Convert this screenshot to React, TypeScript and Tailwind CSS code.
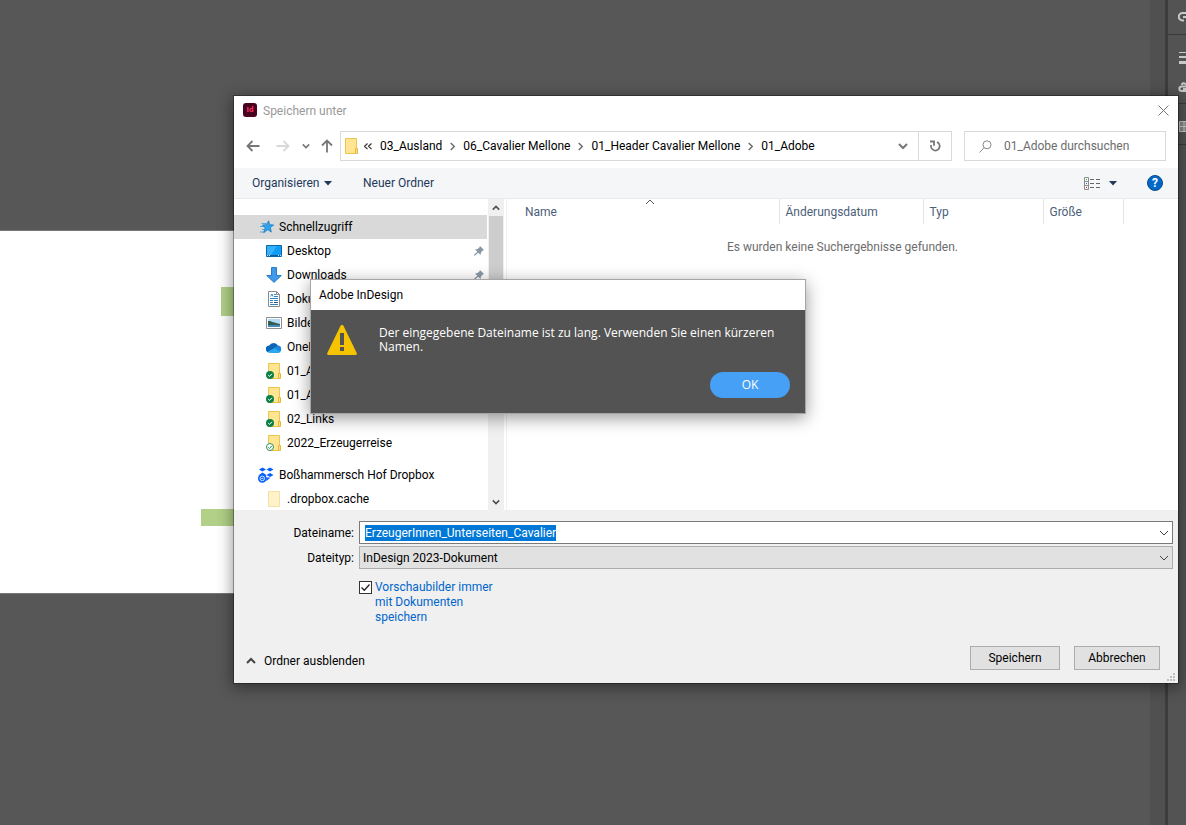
import React, { useEffect, useRef } from 'react';

interface IconProps {
  className?: string;
}

const Chevron: React.FC<IconProps & { dir: 'up' | 'down' | 'right' }> = ({ dir, className = '' }) => {
  const d = { up: 'M1 7l4-4 4 4', down: 'M1 3l4 4 4-4', right: 'M3 1l4 4-4 4' }[dir];
  return (
    <svg width="10" height="10" viewBox="0 0 10 10" fill="none" stroke="currentColor" className={`shrink-0 ${className}`}>
      <path d={d} />
    </svg>
  );
};

const Caret = () => (
  <svg width="8" height="5" viewBox="0 0 8 5" className="shrink-0"><path d="M0 0h8L4 4.6z" fill="#1e395b" /></svg>
);

const Arrow: React.FC<IconProps & { d: string }> = ({ d, className = '' }) => (
  <svg width="14" height="14" viewBox="0 0 14 14" fill="none" stroke="currentColor" strokeWidth="1.8" className={`shrink-0 ${className}`}>
    <path d={d} />
  </svg>
);

const Folder: React.FC<{ badge?: 'full' | 'outline'; pale?: boolean }> = ({ badge, pale }) => (
  <svg width="16" height="18" viewBox="0 0 16 18" className={`shrink-0 ${pale ? 'opacity-50' : ''}`}>
    <path d="M2.5 1.5h11v15h-11z" fill="#ffe492" stroke="#ecc550" />
    {!pale && <path d="M12.5 11.5h2v5h-2z" fill="#ffe08a" stroke="#e6b93c" />}
    {badge === 'full' && <circle cx="4" cy="13" r="4" fill="#0f8045" />}
    {badge === 'outline' && <circle cx="4" cy="13" r="3.5" fill="#fff" stroke="#2d9458" />}
    {badge && <path d="M2.2 13.1l1.4 1.3 2.4-2.6" fill="none" stroke={badge === 'full' ? '#fff' : '#2d9458'} />}
  </svg>
);

const StarIcon = () => (
  <svg width="14" height="14" viewBox="0 0 14 14" className="shrink-0">
    <path d="M1.5 3.5h5M0 6.5h5M2 9.5h3M0 12h5" stroke="#5aa9dd" />
    <path d="M8.6.8l1.1 3.9 4 .3-3.3 2.4.9 4.7-3.5-2.4-4.1 2.9 1.5-4.7L2.400 5l4.2-.3z" fill="#2aa5ee" stroke="#1673b8" strokeWidth=".7" />
  </svg>
);

const DesktopIcon = () => (
  <svg width="16" height="12" viewBox="0 0 16 12" className="shrink-0">
    <path d="M.5.5h15v11H.5z" fill="#0f9cf5" stroke="#0a66a8" />
    <path d="M1 1h10L5 10H1z" fill="#35b0fb" />
    <path d="M1 10.5h14" stroke="#0a5c99" />
    <path d="M1 10.5h1M3 10.5h1M12 10.5h1M14 10.5h1" stroke="#cfeaff" />
  </svg>
);

const DownloadIcon = () => (
  <svg width="16" height="16" viewBox="0 0 16 16" className="shrink-0">
    <path d="M5.5.5h5v8h4.8L8 15.4.7 8.5h4.8z" fill="#3f9bea" stroke="#2a7cc8" />
  </svg>
);

const DocumentIcon = () => (
  <svg width="16" height="16" viewBox="0 0 16 16" className="shrink-0">
    <path d="M2.5.5h8l3 3v12h-11z" fill="#fff" stroke="#8a8a8a" />
    <path d="M10.5.5v3h3" fill="none" stroke="#8a8a8a" />
    <path d="M4.5 5.5L6 3l1 2.5M8 3.5h2M8 5.5h4M4 7.5h8M4 9.5h3M8 9.5h4M4 11.5h3M4 13.5h8" stroke="#2e86c7" fill="none" />
    <path d="M8 11.5h4" stroke="#33536e" />
  </svg>
);

const PictureIcon = () => (
  <svg width="16" height="12" viewBox="0 0 16 12" className="shrink-0">
    <path d="M.5.5h15v11H.5z" fill="#fff" stroke="#8c8f94" />
    <path d="M2 2h12v8H2z" fill="#b5daf7" />
    <path d="M2 4c4 0 6 2 12 3v1H2z" fill="#2f5f4c" />
    <path d="M2 8h12v2H2z" fill="#4a86c0" />
  </svg>
);

const CloudIcon = () => (
  <svg width="16" height="11" viewBox="0 0 16 11" className="shrink-0">
    <path d="M3.5 10.5a3.5 3.5 0 01-.3-7A5 5 0 0112 3.700a3.5 3.5 0 01.5 6.800z" fill="#0a64b8" />
    <path d="M8 6l4-2.4a3.5 3.5 0 01.5 6.9H6z" fill="#1a86dc" />
    <path d="M1.5 9.8L8.5 6l6 4a3 3 0 01-2 .7h-9a3.5 3.5 0 01-2-.9z" fill="#28a8f0" />
  </svg>
);

const DropboxIcon = () => (
  <svg width="16" height="16" viewBox="0 0 16 16" className="shrink-0" fill="#0861fe">
    <path d="M4.5.5l3.5 2-3.5 2-3.5-2zM12 .5l3.5 2-3.5 2-3.5-2zM12 6l3.5 2-3.5 2-3.5-2zM4.5 5.5L8.5 8l-4 2.4L1 8zM8 10.5h4.5L8.5 14z" />
    <circle cx="4.3" cy="11.4" r="4.3" />
    <circle cx="4.3" cy="11.4" r="2.3" fill="none" stroke="#fff" strokeWidth=".8" />
    <path d="M3.3 11.4h2" stroke="#fff" strokeWidth=".9" />
  </svg>
);

const PinIcon = () => (
  <svg width="10" height="10" viewBox="0 0 10 10" className="shrink-0">
    <path d="M6 0l4 4-1.2.6L7 6.4 6.5 9 4.2 6.7.8 9.7 0 9.5l.3-.9L3.3 5.7 1 3.5 3.6 3l1.9-1.8z" fill="#8a98a5" />
  </svg>
);

interface TreeItem {
  label: string;
  icon: React.ReactNode;
  pinned?: boolean;
}

const quickAccess: TreeItem[] = [
  { label: 'Desktop', icon: <DesktopIcon />, pinned: true },
  { label: 'Downloads', icon: <DownloadIcon />, pinned: true },
  { label: 'Dokumente', icon: <DocumentIcon /> },
  { label: 'Bilder', icon: <PictureIcon /> },
  { label: 'OneDrive', icon: <CloudIcon /> },
  { label: '01_Adobe', icon: <Folder badge="full" /> },
  { label: '01_Adobe', icon: <Folder badge="full" /> },
  { label: '02_Links', icon: <Folder badge="full" /> },
  { label: '2022_Erzeugerreise', icon: <Folder badge="outline" /> },
];

const TreeRow: React.FC<{ item: TreeItem }> = ({ item }) => (
  <li className="flex h-6 items-center pl-8 pr-1">
    <span className="flex w-[21px] shrink-0">{item.icon}</span>
    <span className="flex-1">{item.label}</span>
    {item.pinned && <PinIcon />}
  </li>
);

const TitleBar = () => (
  <header className="flex h-7 items-center px-[9px]">
    <span className="mr-1.5 flex size-3.5 items-center justify-center rounded-[3px] bg-[#49021f] text-[8px] font-bold text-[#ff3366]">Id</span>
    <h1 className="flex-1 pt-0.5 text-[#999]">Speichern unter</h1>
    <button aria-label="Schließen" className="text-[#777]">
      <svg width="11" height="11" viewBox="0 0 11 11" stroke="currentColor" className="block"><path d="M.5.5l10 10M10.5.5l-10 10" /></svg>
    </button>
  </header>
);

const Crumb: React.FC<{ label: string; last?: boolean }> = ({ label, last }) => (
  <>
    <a href="#" className="whitespace-nowrap text-black">{label}</a>
    {!last && <Chevron dir="right" className="mx-1.5 size-[9px] stroke-[1.5] text-[#666]" />}
  </>
);

const NavBar = () => (
  <nav className="flex h-11 items-center px-3">
    <button aria-label="Zurück" className="text-[#777]"><Arrow d="M13.5 7H1.5M6.5 2l-5 5 5 5" /></button>
    <button aria-label="Vorwärts" className="ml-4 text-[#d8d8d8]"><Arrow d="M.5 7h12M7.5 2l5 5-5 5" /></button>
    <button aria-label="Verlauf" className="ml-3 text-[#777]"><Chevron dir="down" className="size-2 stroke-2" /></button>
    <button aria-label="Nach oben" className="ml-2.5 text-[#777]"><Arrow d="M7 13.5V1.5M2 6.5l5-5 5 5" /></button>
    <div className="ml-1.5 flex h-[30px] flex-1 items-center border border-[#d9d9d9]">
      <span className="ml-0.5"><Folder /></span>
      <svg width="8" height="7" viewBox="0 0 8 7" fill="none" stroke="#333" strokeWidth="1.2" className="ml-[5px] mr-2 shrink-0">
        <path d="M3.5.5l-3 2.8 3 2.8M7.5.5l-3 2.8 3 2.8" />
      </svg>
      <Crumb label="03_Ausland" />
      <Crumb label="06_Cavalier Mellone" />
      <Crumb label="01_Header Cavalier Mellone" />
      <Crumb label="01_Adobe" last />
      <button aria-label="Vorherige Orte" className="ml-auto mr-2.5 text-[#777]"><Chevron dir="down" className="stroke-2" /></button>
      <button aria-label="Aktualisieren" className="flex h-full w-[33px] items-center justify-center border-l border-[#d9d9d9]">
        <svg width="12" height="12" viewBox="0 0 12 12" fill="none" stroke="#777" strokeWidth="1.8">
          <path d="M1 1.5h4v4.2M8 2.2A4.3 4.3 0 112.2 5" />
        </svg>
      </button>
    </div>
    <label className="ml-3 flex h-[30px] w-[202px] items-center border border-[#d9d9d9] pl-3.5">
      <svg width="13" height="13" viewBox="0 0 13 13" fill="none" stroke="#888" className="mr-3 shrink-0">
        <circle cx="8" cy="4.8" r="4" />
        <path d="M5 7.7L.5 12.5" />
      </svg>
      <input type="search" placeholder="01_Adobe durchsuchen" className="w-full outline-none placeholder:text-[#6d6d6d]" />
    </label>
  </nav>
);

const Toolbar = () => (
  <div className="flex h-[31px] items-center border-b border-[#e8eaec] bg-[#f5f6f7] pl-[18px] pr-[15px] text-[#1e395b]">
    <button className="flex w-20 items-center justify-between whitespace-nowrap">Organisieren <Caret /></button>
    <button className="ml-[31px]">Neuer Ordner</button>
    <button aria-label="Ansicht" className="ml-auto flex items-center gap-2">
      <svg width="17" height="13" viewBox="0 0 17 13" fill="none">
        <path d="M.5.5h4v12h-4zM.5 4.5h4M.5 8.5h4" stroke="#8c8c8c" />
        <path d="M6 2.5h4M12 2.5h4M6 6.5h4M12 6.5h4M6 10.5h4M12 10.5h4" stroke="#666" />
        <path d="M2 2.5h1" stroke="#3a7" /><path d="M2 6.5h1" stroke="#36c" /><path d="M2 10.5h1" stroke="#d22" />
      </svg>
      <Caret />
    </button>
    <button aria-label="Hilfe" className="ml-[30px] flex size-4 items-center justify-center rounded-full border border-[#0a4c8c] bg-[#0069c8] font-bold text-white">?</button>
  </div>
);

const Sidebar = () => (
  <aside className="flex w-[270px] shrink-0">
    <div className="flex-1 overflow-hidden pt-4">
      <ul>
        <li className="mr-px flex h-6 items-center bg-[#d9d9d9] pl-[26px]">
          <span className="flex w-[19px]"><StarIcon /></span>Schnellzugriff
        </li>
        {quickAccess.map((item, i) => <TreeRow key={i} item={item} />)}
      </ul>
      <ul className="mt-2">
        <li className="flex h-6 items-center pl-6"><span className="flex w-[21px]"><DropboxIcon /></span>Boßhammersch Hof Dropbox</li>
        <TreeRow item={{ label: '.dropbox.cache', icon: <Folder pale /> }} />
      </ul>
    </div>
    <div className="flex w-4 flex-col bg-[#f0f0f0] pr-px text-[#505050]">
      <button aria-label="Nach oben scrollen" className="flex h-[17px] items-center justify-center"><Chevron dir="up" className="size-2 stroke-2" /></button>
      <div className="ml-px h-36 bg-[#cdcdcd]" />
      <button aria-label="Nach unten scrollen" className="mt-auto flex h-[17px] items-center justify-center"><Chevron dir="down" className="size-2 stroke-2" /></button>
    </div>
  </aside>
);

const FileList = () => (
  <section className="ml-0.5 flex-1 border-l border-[#f0f0f0]">
    <table className="w-full table-fixed text-[#4c607a]">
      <thead>
        <tr className="h-[25px] text-left">
          <th className="relative pl-[18px] font-normal">
            Name
            <Chevron dir="up" className="absolute -top-0.5 left-[138px] text-[#555]" />
          </th>
          <th className="w-36 border-l border-[#e5e5e5] pl-1.5 font-normal">Änderungsdatum</th>
          <th className="w-[120px] border-l border-[#e5e5e5] pl-1.5 font-normal">Typ</th>
          <th className="w-20 border-l border-[#e5e5e5] pl-1.5 font-normal">Größe</th>
          <th className="w-[55px] border-l border-[#e5e5e5]" />
        </tr>
      </thead>
      <tbody>
        <tr>
          <td colSpan={5} className="pt-[15px] text-center text-[#6d6d6d]">Es wurden keine Suchergebnisse gefunden.</td>
        </tr>
      </tbody>
    </table>
  </section>
);

const Footer = () => {
  const nameRef = useRef<HTMLInputElement>(null);

  useEffect(() => {
    nameRef.current?.focus();
    nameRef.current?.select();
  }, []);

  return (
    <footer className="bg-[#f0f0f0] pb-[13px] pl-3 pr-[5px] pt-[11px]">
      <div className="grid grid-cols-[108px_1fr] items-center gap-x-[5px] gap-y-0.5">
        <label htmlFor="name" className="text-right">Dateiname:</label>
        <div className="flex h-[23px] items-center border border-[#7a7a7a] bg-white pr-[3px]">
          <input id="name" ref={nameRef} defaultValue="ErzeugerInnen_Unterseiten_Cavalier" className="ml-[5px] h-4 flex-1 leading-4 outline-none selection:bg-[#0078d7] selection:text-white" />
          <button aria-label="Vorschläge" className="text-[#444]"><Chevron dir="down" /></button>
        </div>
        <label htmlFor="type" className="text-right">Dateityp:</label>
        <div className="relative flex h-[23px] items-center border border-[#adadad] bg-[#e1e1e1]">
          <select id="type" className="h-full w-full appearance-none pl-[3px] outline-none">
            <option>InDesign 2023-Dokument</option>
          </select>
          <Chevron dir="down" className="pointer-events-none absolute right-[3px] text-[#444]" />
        </div>
        <label className="col-start-2 mt-[9px] flex w-[146px] items-start gap-[3px] leading-[15px] text-[#0066cc]">
          <span className="relative mt-px flex shrink-0">
            <input type="checkbox" defaultChecked className="peer size-[13px] appearance-none border border-[#333] bg-white" />
            <svg width="13" height="13" viewBox="0 0 13 13" fill="none" stroke="#222" strokeWidth="1.3" className="pointer-events-none absolute hidden peer-checked:block">
              <path d="M2.5 6.5l2.8 2.8 5.2-5.8" />
            </svg>
          </span>
          Vorschaubilder immer mit Dokumenten speichern
        </label>
      </div>
      <div className="mt-[21px] flex items-start pr-[13px]">
        <button className="mt-[7px] flex items-center gap-2"><Chevron dir="up" className="stroke-2 text-[#444]" />Ordner ausblenden</button>
        <button className="ml-auto h-6 w-[90px] border border-[#adadad] bg-[#e1e1e1]">Speichern</button>
        <button className="ml-3.5 h-6 w-[86px] border border-[#adadad] bg-[#e1e1e1]">Abbrechen</button>
      </div>
      <svg width="8" height="8" viewBox="0 0 8 8" fill="#bfbfbf" className="absolute bottom-0.5 right-[3px]">
        <path d="M6 0h2v2H6zM3 3h2v2H3zM6 3h2v2H6zM0 6h2v2H0zM3 6h2v2H3zM6 6h2v2H6z" />
      </svg>
    </footer>
  );
};

const Alert = () => (
  <div role="alertdialog" aria-label="Adobe InDesign" className="absolute left-[76px] top-[183px] w-[496px] border border-[#a5a5a5] font-['Open_Sans','Noto_Sans',sans-serif] shadow-[0_4px_16px_rgba(0,0,0,0.4)]">
    <h2 className="flex h-[30px] items-center bg-white pl-2 font-['Roboto','Noto_Sans',sans-serif]">Adobe InDesign</h2>
    <div className="bg-[#535353] pb-[15px] pl-4 pr-[15px] pt-[15px] text-white">
      <div className="flex gap-[22px]">
        <svg width="30" height="30" viewBox="0 0 30 30" className="shrink-0">
          <path d="M15 0c.8 0 1.3.5 1.7 1.2L29.7 28c.5 1.2 0 2-1 2H1.3c-1 0-1.5-.8-1-2L13.3 1.2C13.7.5 14.2 0 15 0z" fill="#f5c400" />
          <path d="M13 8h4v12h-4zM13 22h4v4h-4z" fill="#535353" />
        </svg>
        <p className="pt-px leading-[14px]">Der eingegebene Dateiname ist zu lang. Verwenden Sie einen kürzeren Namen.</p>
      </div>
      <button className="ml-auto mt-[17px] block h-[26px] w-20 rounded-full bg-[#46a0f5]">OK</button>
    </div>
  </div>
);

const SaveDialog = () => (
  <div role="dialog" className="absolute left-[234px] right-2 top-24 bg-white text-xs text-black shadow-[0_3px_14px_2px_rgba(0,0,0,0.4)] outline outline-[#00000050]">
    <TitleBar />
    <NavBar />
    <Toolbar />
    <div className="flex h-[311px]">
      <Sidebar />
      <FileList />
    </div>
    <Footer />
    <Alert />
  </div>
);

const Workspace = () => (
  <>
    <main className="flex-1 pt-[230px]">
      <div className="flex h-[364px] flex-col items-start border-y border-[#777] bg-white">
        <div className="ml-[221px] mt-14 h-[29px] w-40 bg-[#b2d088]" />
        <div className="mb-[67px] ml-[201px] mt-auto h-[17px] w-40 bg-[#b2d088]" />
      </div>
    </main>
    <div className="w-[15px] bg-[#505050]" />
    <aside className="w-[21px] border-l-[3px] border-[#3c3c3c] bg-[#535353] text-[#c8c8c8]">
      <div className="flex h-[35px] justify-end overflow-hidden border-b border-[#3a3a3a] pt-3">
        <svg width="8" height="11" viewBox="0 0 8 11" fill="none" stroke="currentColor" strokeWidth="2"><path d="M8 1H4.5a3.5 3.5 0 000 7.5H6M5 5h3" /></svg>
      </div>
      <div className="flex h-[69px] flex-col items-end gap-[18px] border-b border-[#3a3a3a] pt-[17px]">
        <svg width="7" height="12" viewBox="0 0 7 12" stroke="currentColor"><path d="M0 .5h7" /><path d="M0 5h7" strokeWidth="2" /><path d="M0 10.5h7" strokeWidth="3" /></svg>
        <svg width="8" height="10" viewBox="0 0 8 10" fill="none" stroke="currentColor" strokeWidth="2"><path d="M8 2.500C6 .5 4 1 4 3M8 4.5H4C.5 4.5.5 9 4 9h4M5 7h3" /></svg>
      </div>
      <div className="flex h-[41px] items-center justify-end border-b border-[#3a3a3a] pt-1">
        <svg width="7" height="11" viewBox="0 0 7 11" fill="#888" stroke="currentColor"><path d="M.5.5H8v10H.5zM5 .5v10M.5 5.5H8" /></svg>
      </div>
    </aside>
  </>
);

export default function App() {
  return (
    <div className="relative flex min-h-screen overflow-hidden bg-[#575757] font-['Roboto','Noto_Sans',sans-serif]">
      <Workspace />
      <SaveDialog />
    </div>
  );
}
